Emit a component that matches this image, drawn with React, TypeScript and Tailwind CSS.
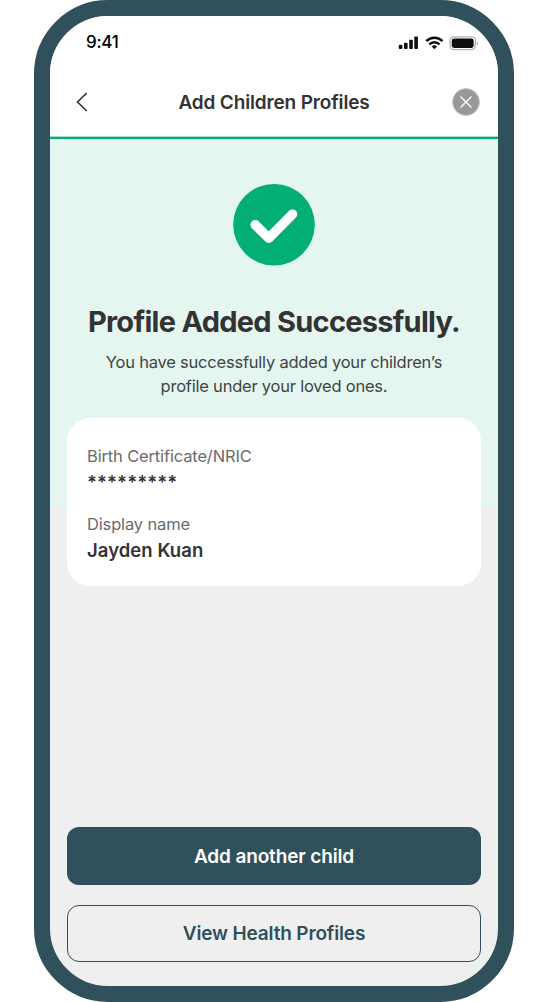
import React from "react";

function StatusIcons() {
  return (
    <svg width="80" height="16" viewBox="0 0 80 16" fill="#0d0d0d" aria-hidden="true">
      <rect x="0.8" y="9.8" width="3.6" height="4.2" rx="1" />
      <rect x="6" y="7.8" width="3.6" height="6.2" rx="1" />
      <rect x="11.2" y="4.8" width="3.6" height="9.2" rx="1" />
      <rect x="16.3" y="1.6" width="3.6" height="12.4" rx="1" />
      <g fill="none" stroke="#0d0d0d" strokeWidth="2.5">
        <path d="M28.3 6.1a11.2 11.2 0 0 1 16.2 0" />
        <path d="M31.3 9.4a7 7 0 0 1 10.2 0" />
      </g>
      <path d="M36.4 14.2l-2.7-2.7a4 4 0 0 1 5.4 0z" />
      <rect x="52" y="1.8" width="25.4" height="12.8" rx="4" fill="none" stroke="#b0b0b0" strokeWidth="1.3" />
      <rect x="53.7" y="3.5" width="22" height="9.4" rx="2.4" />
      <path d="M78.9 6v4.4c1.3-.8 1.3-3.6 0-4.4z" fill="#a8a8a8" />
    </svg>
  );
}

function StatusBar() {
  return (
    <div className="flex h-[53px] items-center justify-between pr-[20px] pl-[36px]">
      <span className="pb-px text-[17px] leading-5 font-medium tracking-[-0.3px] text-black">9:41</span>
      <StatusIcons />
    </div>
  );
}

function NavBar() {
  return (
    <div className="flex h-[66px] items-center justify-between pr-[17px] pl-[24px]">
      <button aria-label="Back" className="flex w-[23px]">
        <svg width="16" height="22" viewBox="0 0 16 22" fill="none" stroke="#333" strokeWidth="1.6">
          <path d="M12.8 2L3.5 11l9.3 9" />
        </svg>
      </button>
      <h1 className="pt-px text-[19px] leading-6 font-semibold tracking-[-0.15px] text-[#333]">Add Children Profiles</h1>
      <button aria-label="Close" className="flex">
        <svg width="30" height="30" viewBox="0 0 30 30" fill="none">
          <circle cx="15" cy="15" r="13.5" fill="#999" stroke="#ccc" strokeWidth="1" />
          <path d="M10 10l10 10M20 10L10 20" stroke="#fff" strokeWidth="1.4" strokeLinecap="round" />
        </svg>
      </button>
    </div>
  );
}

function Field({ label, value }: { label: string; value: string }) {
  return (
    <div>
      <dt className="text-[16.5px] leading-[27px] font-normal tracking-[-0.15px] text-[#6b6b6b]">{label}</dt>
      <dd className="-mt-px text-[18.5px] leading-[27px] font-semibold tracking-[0.05px] text-[#333]">{value}</dd>
    </div>
  );
}

export default function App() {
  return (
    <div className="flex h-[1002px] w-[548px] justify-center bg-white font-['Inter',sans-serif]">
      <main className="flex h-full w-[480px] flex-col overflow-hidden rounded-[74px] border-[16px] border-[#30505b] bg-[#efefef]">
        <header className="h-[123px] shrink-0 border-b-2 border-[#00af73] bg-white shadow-[inset_0_-1px_0_#a5dfca]">
          <StatusBar />
          <NavBar />
        </header>
        <section className="flex h-[368px] shrink-0 flex-col items-center bg-[#e5f6f0] pt-[44px] text-center text-[#333]">
          <svg width="84" height="84" viewBox="0 0 84 84" fill="none" className="shrink-0" aria-hidden="true">
            <circle cx="42" cy="41.7" r="40.8" fill="#03af73" />
            <path d="M23.2 41.8L36.8 55.1L60.5 31.2" stroke="#fff" strokeWidth="9.6" strokeLinecap="round" strokeLinejoin="round" />
          </svg>
          <h2 className="mt-[37px] text-[29px] leading-9 font-bold tracking-[-0.73px] whitespace-nowrap">Profile Added Successfully.</h2>
          <p className="mt-[10px] text-[16.5px] leading-[24px] font-normal tracking-[-0.22px] whitespace-nowrap text-[#404442]">
            You have successfully added your children’s
            <br />
            profile under your loved ones.
          </p>
        </section>
        <dl className="mx-[17px] -mt-[89px] flex h-[168px] shrink-0 flex-col gap-[15px] rounded-[23px] bg-white px-[20px] pt-[25px]">
          <Field label="Birth Certificate/NRIC" value="*********" />
          <Field label="Display name" value="Jayden Kuan" />
        </dl>
        <div className="mt-auto mb-[24px] flex flex-col gap-[20px] px-[17px] text-[19px] font-semibold tracking-[-0.15px]">
          <button className="h-[58px] rounded-[12px] bg-[#30505b] pt-[2px] text-white">Add another child</button>
          <button className="h-[57px] rounded-[12px] border-[1.4px] border-[#30505b] pt-[2px] text-[#30505b]">View Health Profiles</button>
        </div>
      </main>
    </div>
  );
}
